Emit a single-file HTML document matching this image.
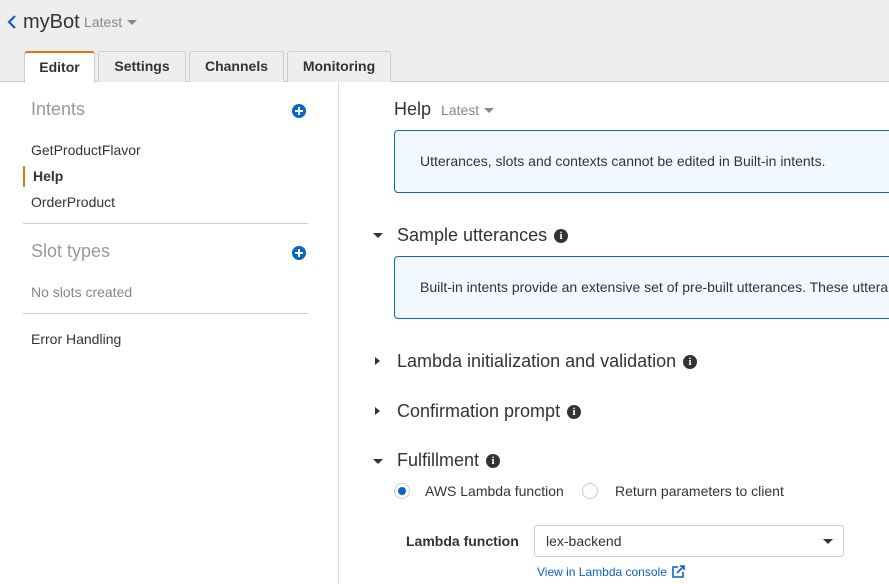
<!DOCTYPE html>
<html><head><style>
*{margin:0;padding:0;box-sizing:border-box}
body{width:889px;height:584px;overflow:hidden;background:#fff;font-family:"Liberation Sans",Arial,sans-serif;color:#333;position:relative}
.a{position:absolute;white-space:nowrap}
.hdr{position:absolute;left:0;top:0;width:889px;height:82px;background:#eee;border-bottom:1px solid #ccc}
.tab{position:absolute;top:51px;height:31px;border:1px solid #ccc;border-bottom:none;border-radius:3px 3px 0 0;background:#eee;font-weight:bold;font-size:14px;text-align:center;line-height:29px;color:#333}
.tab.on{background:#fff;border-top:2px solid #ec7211;height:32px;line-height:28px}
.plus{position:absolute;width:14px;height:14px;border-radius:50%;background:#0b63c4}
.plus:before{content:"";position:absolute;left:3px;top:6px;width:8px;height:2px;background:#fff}
.plus:after{content:"";position:absolute;left:6px;top:3px;width:2px;height:8px;background:#fff}
.info{position:absolute;width:14px;height:14px;border-radius:50%;background:#333;color:#fff;font-size:11px;font-weight:bold;text-align:center;line-height:14px;font-family:"Liberation Serif",serif}
.box{position:absolute;left:394px;width:520px;height:63px;border:1px solid #0b66c2;border-radius:4px;background:#f1f8ff;font-size:14px;padding:22px 0 0 25px;color:#333;white-space:nowrap;overflow:hidden}
.sec{font-size:18px;color:#333}
.dn{position:absolute;width:0;height:0;border-left:5px solid transparent;border-right:5px solid transparent;border-top:5px solid #333}
.rt{position:absolute;width:0;height:0;border-top:4px solid transparent;border-bottom:4px solid transparent;border-left:5px solid #333}
</style></head><body>
<div class="hdr"></div>
<svg class="a" style="left:7px;top:14px" width="10" height="16"><path d="M8 2 L2 8 L8 14" stroke="#0b63c4" stroke-width="2.2" fill="none"/></svg>
<div class="a" style="left:23px;top:11px;font-size:20px;color:#333">myBot</div>
<div class="a" style="left:84px;top:14px;font-size:14px;color:#888">Latest</div>
<div class="dn" style="left:127px;top:20px;border-top-color:#888"></div>
<div class="tab on" style="left:24px;width:71px">Editor</div>
<div class="tab" style="left:98px;width:88px">Settings</div>
<div class="tab" style="left:189px;width:95px">Channels</div>
<div class="tab" style="left:287px;width:104px">Monitoring</div>
<div class="a" style="left:338px;top:82px;width:1px;height:502px;background:#ddd"></div>

<div class="a" style="left:31px;top:99px;font-size:18px;color:#999">Intents</div>
<div class="plus" style="left:292px;top:104px"></div>
<div class="a" style="left:31px;top:142px;font-size:14px">GetProductFlavor</div>
<div class="a" style="left:23px;top:166px;width:2px;height:21px;background:#ec7211"></div>
<div class="a" style="left:33px;top:168px;font-size:14px;font-weight:bold">Help</div>
<div class="a" style="left:31px;top:194px;font-size:14px">OrderProduct</div>
<div class="a" style="left:23px;top:223px;width:285px;height:1px;background:#ccc"></div>
<div class="a" style="left:31px;top:241px;font-size:18px;color:#999">Slot types</div>
<div class="plus" style="left:292px;top:246px"></div>
<div class="a" style="left:31px;top:284px;font-size:14px;color:#888">No slots created</div>
<div class="a" style="left:23px;top:313px;width:285px;height:1px;background:#ccc"></div>
<div class="a" style="left:31px;top:331px;font-size:14px">Error Handling</div>

<div class="a" style="left:394px;top:99px;font-size:18px">Help</div>
<div class="a" style="left:441px;top:102px;font-size:14px;color:#888">Latest</div>
<div class="dn" style="left:484px;top:108px;border-top-color:#888"></div>
<div class="box" style="top:130px">Utterances, slots and contexts cannot be edited in Built-in intents.</div>

<div class="dn" style="left:373px;top:233px"></div>
<div class="a sec" style="left:397px;top:225px">Sample utterances</div>
<div class="info" style="left:554px;top:229px">i</div>
<div class="box" style="top:256px">Built-in intents provide an extensive set of pre-built utterances. These utterances</div>

<div class="rt" style="left:375px;top:357px"></div>
<div class="a sec" style="left:397px;top:351px">Lambda initialization and validation</div>
<div class="info" style="left:683px;top:355px">i</div>
<div class="rt" style="left:375px;top:407px"></div>
<div class="a sec" style="left:397px;top:401px">Confirmation prompt</div>
<div class="info" style="left:567px;top:405px">i</div>
<div class="dn" style="left:373px;top:459px"></div>
<div class="a sec" style="left:397px;top:450px">Fulfillment</div>
<div class="info" style="left:486px;top:454px">i</div>

<div class="a" style="left:394px;top:483px;width:16px;height:16px;border-radius:50%;border:1px solid #ccc;background:#fff"></div>
<div class="a" style="left:398px;top:487px;width:8px;height:8px;border-radius:50%;background:#0b63c4"></div>
<div class="a" style="left:425px;top:483px;font-size:14px">AWS Lambda function</div>
<div class="a" style="left:582px;top:483px;width:16px;height:16px;border-radius:50%;border:1px solid #ccc;background:#fff"></div>
<div class="a" style="left:615px;top:483px;font-size:14px">Return parameters to client</div>

<div class="a" style="left:406px;top:533px;font-size:14px;font-weight:bold">Lambda function</div>
<div class="a" style="left:534px;top:525px;width:310px;height:32px;border:1px solid #ccc;border-radius:3px;font-size:14px;padding:7px 0 0 11px">lex-backend</div>
<div class="dn" style="left:823px;top:539px"></div>
<div class="a" style="left:537px;top:565px;font-size:12px;color:#0b63c4">View in Lambda console</div>
<svg class="a" style="left:671px;top:565px" width="15" height="14"><path d="M7 2 H2 V12 H12 V7" stroke="#0b63c4" stroke-width="1.6" fill="none"/><path d="M6 8 L13 1 M9 1 H13 V5" stroke="#0b63c4" stroke-width="1.6" fill="none"/></svg>
</body></html>
